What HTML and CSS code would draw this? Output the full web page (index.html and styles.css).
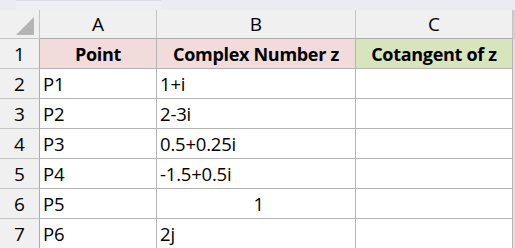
FILE: index.html
```html
<!DOCTYPE html>
<html>
<head>
<meta charset="utf-8">
<link rel="stylesheet" href="styles.css">
</head>
<body>
<div class="topbar"><div class="namebox"></div><div class="fbar"></div></div>
<div class="sheet">
  <div class="corner"><svg width="40" height="29" viewBox="0 0 40 29"><polygon points="16,25 34,25 34,7" fill="#b4b4b4"/></svg></div>
  <div class="colhead">A</div>
  <div class="colhead">B</div>
  <div class="colhead">C</div>
  <div class="edge head"></div>

  <div class="rowhead">1</div>
  <div class="cell hdr pink">Point</div>
  <div class="cell hdr pink">Complex Number z</div>
  <div class="cell hdr green">Cotangent of z</div>
  <div class="edge"></div>

  <div class="rowhead">2</div>
  <div class="cell">P1</div>
  <div class="cell">1+i</div>
  <div class="cell"></div>
  <div class="edge"></div>

  <div class="rowhead">3</div>
  <div class="cell">P2</div>
  <div class="cell">2-3i</div>
  <div class="cell"></div>
  <div class="edge"></div>

  <div class="rowhead">4</div>
  <div class="cell">P3</div>
  <div class="cell">0.5+0.25i</div>
  <div class="cell"></div>
  <div class="edge"></div>

  <div class="rowhead">5</div>
  <div class="cell">P4</div>
  <div class="cell">-1.5+0.5i</div>
  <div class="cell"></div>
  <div class="edge"></div>

  <div class="rowhead">6</div>
  <div class="cell">P5</div>
  <div class="cell num">1</div>
  <div class="cell"></div>
  <div class="edge"></div>

  <div class="rowhead">7</div>
  <div class="cell">P6</div>
  <div class="cell">2j</div>
  <div class="cell"></div>
  <div class="edge"></div>
</div>
</body>
</html>
```
FILE: styles.css
```css
html, body {
  margin: 0;
  padding: 0;
  background: #ffffff;
  overflow: hidden;
}
body {
  width: 515px;
  height: 248px;
  font-family: "Open Sans", "Liberation Sans", sans-serif;
  color: #000;
}
.topbar {
  height: 10px;
  background: #e9edf1;
  display: flex;
}
.namebox {
  width: 16px;
}
.fbar {
  width: 145px;
  border-top: 1px solid #d9dde1;
  background: #eceff3;
}
.sheet {
  display: grid;
  grid-template-columns: 40px 117px 199px 157px 2px;
  grid-template-rows: 29px repeat(7, 30px);
}
.corner {
  background: #f0f0f0;
  border-right: 1px solid #c4c4c4;
  border-bottom: 1px solid #c4c4c4;
  box-sizing: border-box;
}
.corner svg { display: block; }
.colhead {
  background: #f0f0f0;
  border-right: 1px solid #c4c4c4;
  border-bottom: 1px solid #ababab;
  box-sizing: border-box;
  display: flex;
  align-items: center;
  justify-content: center;
  font-size: 19px;
}
.rowhead {
  background: #f0f0f0;
  border-right: 1px solid #ababab;
  border-bottom: 1px solid #c4c4c4;
  box-sizing: border-box;
  display: flex;
  align-items: center;
  justify-content: center;
  font-size: 19px;
}
.cell {
  border-right: 1px solid #b4b4b4;
  border-bottom: 1px solid #b4b4b4;
  box-sizing: border-box;
  display: flex;
  align-items: center;
  padding-left: 3px;
  font-size: 18.5px;
  letter-spacing: -0.2px;
}
.hdr {
  justify-content: center;
  padding-left: 0;
  font-weight: 700;
  font-size: 18px;
  letter-spacing: -0.3px;
}
.pink { background: #f2dcdb; }
.green { background: #d8e4bc; }
.num {
  justify-content: flex-end;
  padding-right: 91px;
}
.edge {
  background: #e0e0e0;
}
.edge.head { background: #d0d0d0; }
```
